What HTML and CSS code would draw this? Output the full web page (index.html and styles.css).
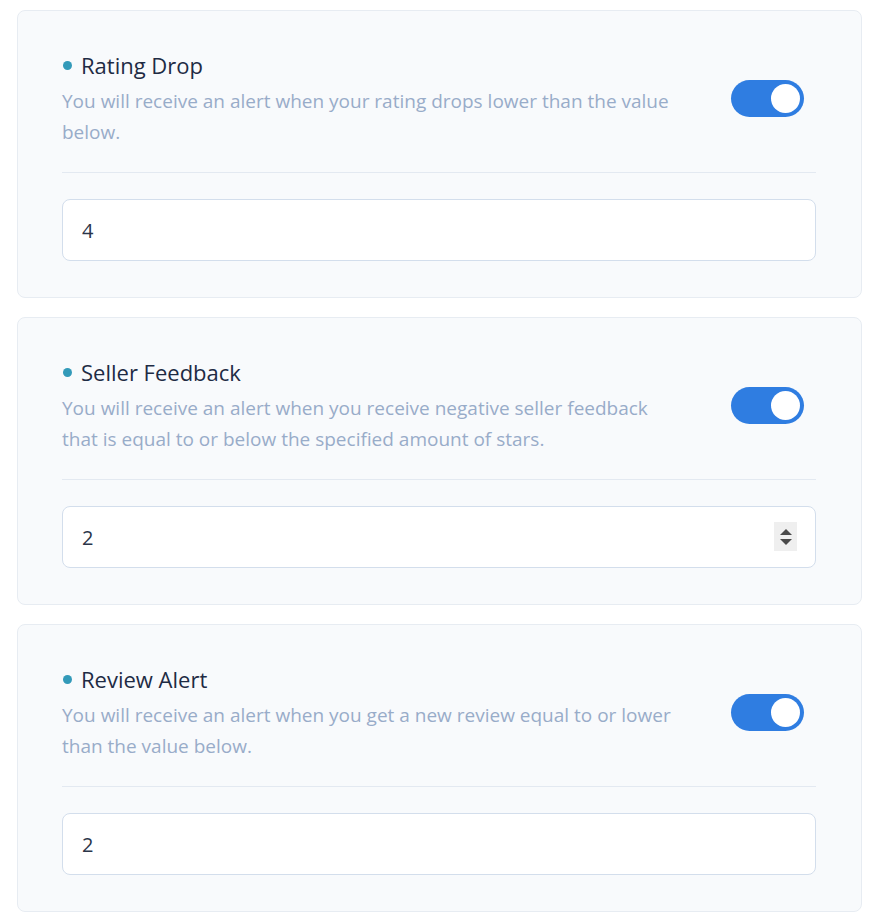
FILE: index.html
```html
<!DOCTYPE html>
<html lang="en">
<head>
    <meta charset="UTF-8">
    <title>Alerts</title>
    <link rel="stylesheet" href="styles.css">
</head>
<body>
    <div class="alerts">
        <section class="alert-card">
            <div class="alert-card__head">
                <div class="alert-card__text">
                    <h3 class="alert-card__title"><span class="dot"></span>Rating Drop</h3>
                    <p class="alert-card__desc">You will receive an alert when your rating drops lower than the value below.</p>
                </div>
                <label class="toggle"><input type="checkbox" checked><span class="toggle__track"></span></label>
            </div>
            <hr class="alert-card__rule">
            <div class="field">
                <input class="field__input" type="text" value="4">
            </div>
        </section>

        <section class="alert-card">
            <div class="alert-card__head">
                <div class="alert-card__text">
                    <h3 class="alert-card__title"><span class="dot"></span>Seller Feedback</h3>
                    <p class="alert-card__desc">You will receive an alert when you receive negative seller feedback that is equal to or below the specified amount of stars.</p>
                </div>
                <label class="toggle"><input type="checkbox" checked><span class="toggle__track"></span></label>
            </div>
            <hr class="alert-card__rule">
            <div class="field">
                <input class="field__input" type="text" value="2">
                <span class="spinner"><span class="spinner__up"></span><span class="spinner__down"></span></span>
            </div>
        </section>

        <section class="alert-card">
            <div class="alert-card__head">
                <div class="alert-card__text">
                    <h3 class="alert-card__title"><span class="dot"></span>Review Alert</h3>
                    <p class="alert-card__desc">You will receive an alert when you get a new review equal to or lower than the value below.</p>
                </div>
                <label class="toggle"><input type="checkbox" checked><span class="toggle__track"></span></label>
            </div>
            <hr class="alert-card__rule">
            <div class="field">
                <input class="field__input" type="text" value="2">
            </div>
        </section>
    </div>
</body>
</html>
```

FILE: styles.css
```css
body {
    margin: 10px 17px;
    background: #ffffff;
    font-family: "Open Sans", "Noto Sans", sans-serif;
}

.alerts {
    display: flex;
    flex-direction: column;
    gap: 19px;
}

.alert-card {
    background: #f8fafc;
    border: 1px solid #e7ecf2;
    border-radius: 8px;
    padding: 39px 45px 36px 44px;
}

.alert-card__head {
    display: flex;
    align-items: center;
    justify-content: space-between;
}

.alert-card__text {
    width: 625px;
}

.alert-card__title {
    display: flex;
    align-items: center;
    gap: 9px;
    margin: 0;
    font-size: 22px;
    font-weight: 400;
    line-height: 30px;
    color: #1e2b44;
}

.dot {
    width: 9px;
    height: 9px;
    margin-left: 1px;
    border-radius: 50%;
    background: #339ab9;
}

.alert-card__desc {
    margin: 6px 0 0;
    font-size: 19px;
    line-height: 31px;
    color: #98acc9;
}

.toggle {
    position: relative;
    display: block;
    width: 73px;
    height: 37px;
    margin: 0 12px 2px 0;
    flex-shrink: 0;
}

.toggle input {
    display: none;
}

.toggle__track {
    display: block;
    width: 100%;
    height: 100%;
    border-radius: 19px;
    background: #2f7de1;
}

.toggle__track::after {
    content: "";
    position: absolute;
    top: 4px;
    right: 4px;
    width: 29px;
    height: 29px;
    border-radius: 50%;
    background: #ffffff;
}

.alert-card__rule {
    margin: 24px 0 26px;
    border: 0;
    border-top: 1px solid #e3e9f1;
}

.field {
    position: relative;
}

.field__input {
    display: block;
    box-sizing: border-box;
    width: 100%;
    height: 62px;
    padding: 0 20px 0 19px;
    border: 1px solid #d3deec;
    border-radius: 8px;
    background: #ffffff;
    font-family: "Open Sans", "Noto Sans", sans-serif;
    font-size: 20px;
    color: #2b3549;
    outline: none;
}

.spinner {
    position: absolute;
    top: 16px;
    right: 19px;
    width: 23px;
    height: 29px;
    background: #efefef;
    display: flex;
    flex-direction: column;
    align-items: center;
    justify-content: center;
    gap: 4px;
}

.spinner__up,
.spinner__down {
    width: 0;
    height: 0;
    border-left: 6px solid transparent;
    border-right: 6px solid transparent;
}

.spinner__up {
    border-bottom: 6px solid #4a4a4a;
}

.spinner__down {
    border-top: 6px solid #4a4a4a;
}
```
